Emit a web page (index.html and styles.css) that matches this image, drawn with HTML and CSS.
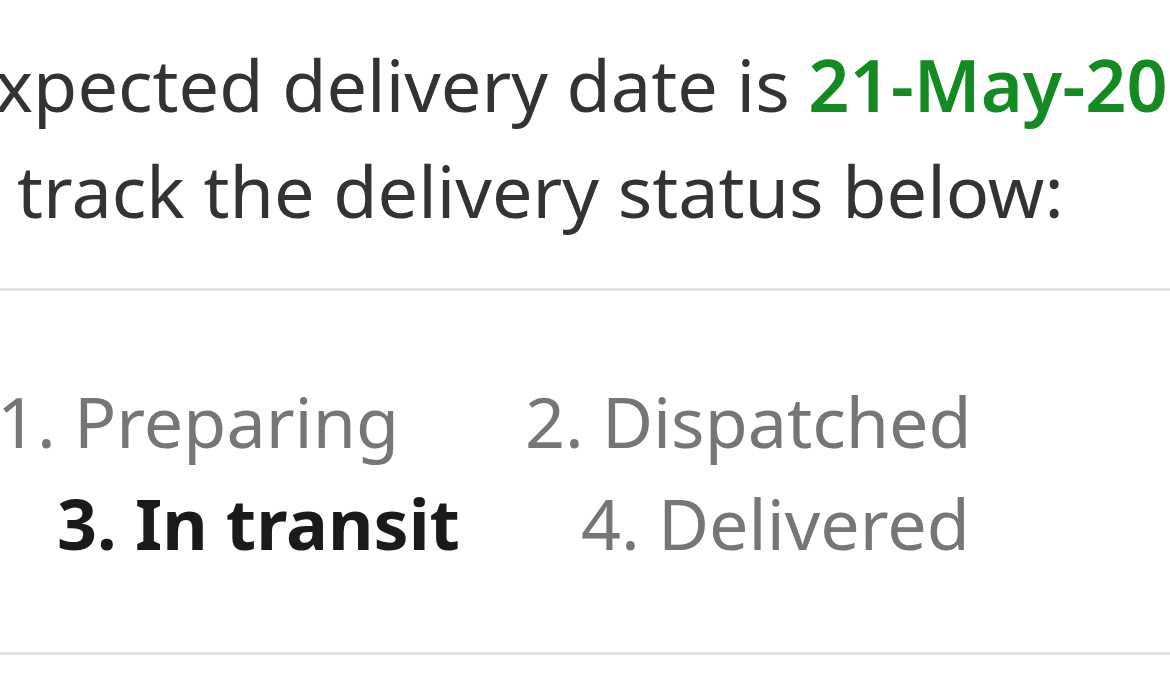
FILE: index.html
```html
<!DOCTYPE html>
<html lang="en">
<head>
    <meta charset="UTF-8">
    <meta name="viewport" content="width=device-width, initial-scale=1.0">
    <title>Delivery status</title>
    <link rel="stylesheet" href="styles.css">
</head>
<body>
    <div class="panel">
        <div class="summary">
            <div class="line line-date">Expected delivery date is <span class="date">21-May-2024</span>.</div>
            <div class="line line-track">You can track the delivery status below:</div>
        </div>

        <div class="steps">
            <div class="row row-first">
                <span class="step">1. Preparing</span>
                <span class="step">2. Dispatched</span>
            </div>
            <div class="row row-second">
                <span class="step current">3. In transit</span>
                <span class="step">4. Delivered</span>
            </div>
        </div>
    </div>
</body>
</html>
```

FILE: styles.css
```css
body {
    margin: 0;
    background-color: #fff;
    font-family: "Noto Sans", "Open Sans", sans-serif;
    overflow: hidden;
}

.panel {
    width: 1170px;
    height: 700px;
    overflow: hidden;
}

.summary {
    padding-top: 31px;
    font-size: 72px;
    line-height: 106px;
    color: #333;
    white-space: nowrap;
}

.line-date {
    margin-left: -45px;
}

.line-track {
    margin-left: -265px;
}

.date {
    color: #138a22;
    font-weight: 600;
}

.steps {
    margin-top: 45px;
    padding: 79px 0 78px;
    border-top: 3px solid #e2e2e2;
    border-bottom: 3px solid #e2e2e2;
    font-size: 70px;
    line-height: 102px;
    white-space: nowrap;
}

.row {
    display: flex;
    gap: 126px;
}

.row-first {
    margin-left: -3px;
}

.row-second {
    margin-left: 57px;
    gap: 121px;
}

.step {
    color: #767676;
}

.step.current {
    color: #1a1a1a;
    font-weight: 700;
}
```
